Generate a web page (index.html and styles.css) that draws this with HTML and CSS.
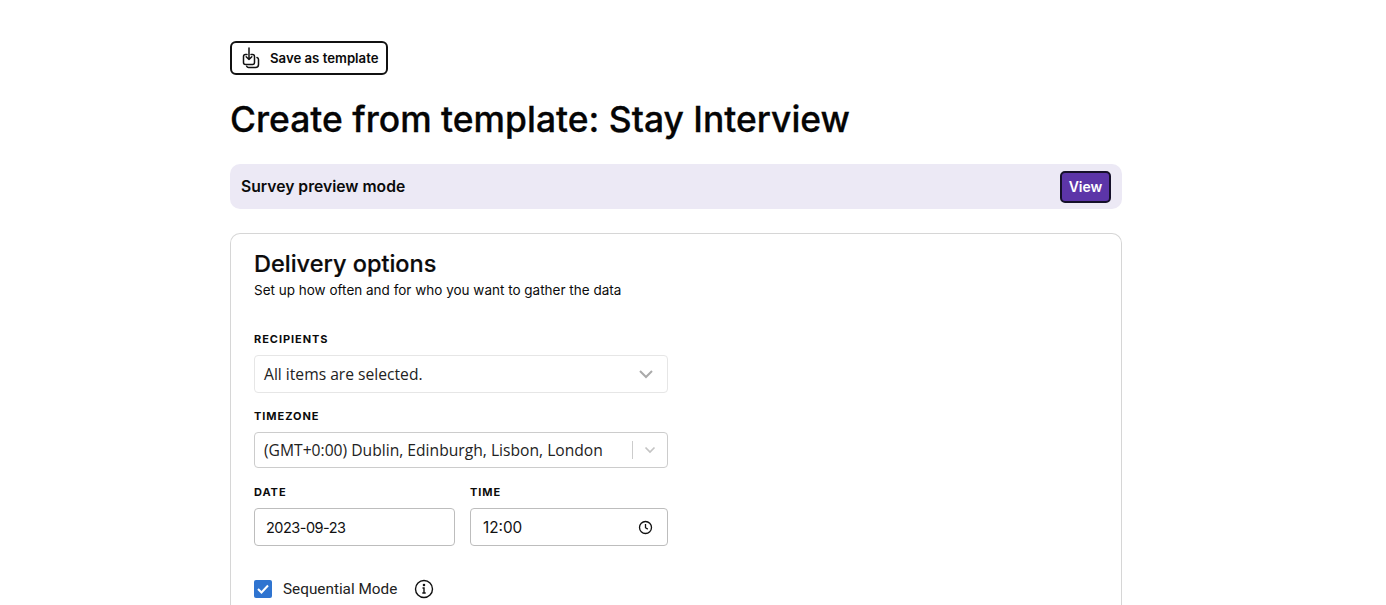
FILE: index.html
```html
<!DOCTYPE html>
<html lang="en">
<head>
  <meta charset="UTF-8">
  <meta name="viewport" content="width=device-width, initial-scale=1">
  <title>Create from template: Stay Interview</title>
  <link rel="stylesheet" href="styles.css">
</head>
<body>
  <div class="page">
    <button class="save-btn" type="button">
      <svg class="save-icon" width="18" height="22" viewBox="0 0 18 22" fill="none" stroke="#111" stroke-width="1.5" stroke-linecap="round" stroke-linejoin="round">
        <path d="M5 7.500H3.500a2 2 0 0 0-2 2v6a2 2 0 0 0 2 2h7a2 2 0 0 0 2-2v-6a2 2 0 0 0-2-2H9"/>
        <path d="M7 1v11.500M4.200 9.700 7 12.500l2.800-2.800"/>
        <path d="M15 10.500a2 2 0 0 1 1.500 1.900v5.100a3 3 0 0 1-3 3H6.500a2 2 0 0 1-1.800-1.200"/>
      </svg>
      <span>Save as template</span>
    </button>

    <h1 class="page-title">Create from template: Stay Interview</h1>

    <div class="preview-bar">
      <span class="preview-label">Survey preview mode</span>
      <button class="view-btn" type="button">View</button>
    </div>

    <section class="card">
      <h2 class="card-title">Delivery options</h2>
      <p class="card-sub">Set up how often and for who you want to gather the data</p>

      <div class="form">
        <label class="field-label label-recipients">RECIPIENTS</label>
        <div class="select select-multi">
          <span>All items are selected.</span>
          <svg width="16" height="10" viewBox="0 0 16 10" fill="none" stroke="#aaa" stroke-width="2"><path d="M2 2l6 6 6-6"/></svg>
        </div>

        <label class="field-label label-timezone">TIMEZONE</label>
        <div class="select select-zone">
          <span>(GMT+0:00) Dublin, Edinburgh, Lisbon, London</span>
          <div class="zone-end">
            <i class="zone-sep"></i>
            <svg width="12" height="8" viewBox="0 0 12 8" fill="none" stroke="#c4c4c4" stroke-width="1.700"><path d="M1.500 1.500 6 6l4.500-4.500"/></svg>
          </div>
        </div>

        <div class="date-row">
          <div class="date-col">
            <label class="field-label">DATE</label>
            <div class="input input-date">2023-09-23</div>
          </div>
          <div class="time-col">
            <label class="field-label">TIME</label>
            <div class="input input-time">
              <span>12:00</span>
              <svg width="15" height="15" viewBox="0 0 15 15" fill="none" stroke="#111" stroke-width="1.300"><circle cx="7.500" cy="7.500" r="6"/><path d="M7.500 4v3.700l2.300 1.400"/></svg>
            </div>
          </div>
        </div>

        <div class="check-row">
          <span class="checkbox">
            <svg width="12" height="10" viewBox="0 0 12 10" fill="none" stroke="#fff" stroke-width="2"><path d="M1 5l3.500 3.500L11 1.500"/></svg>
          </span>
          <span class="check-label">Sequential Mode</span>
          <svg class="info-icon" width="20" height="20" viewBox="0 0 20 20" fill="none" stroke="#111" stroke-width="1.400">
            <circle cx="10" cy="10" r="8.500"/>
            <path d="M8.500 9H10v5M8.300 14h3.400"/>
            <circle cx="10" cy="6" r=".6" fill="#111"/>
          </svg>
        </div>
      </div>
    </section>
  </div>
</body>
</html>
```

FILE: styles.css
```css
html, body { margin: 0; padding: 0; height: 100%; overflow: hidden; }
body { background: #fff; color: #0b0b0b; font-family: Inter, "Noto Sans", sans-serif; }

.page { display: flex; flex-direction: column; align-items: stretch; width: 892px; height: 100%; margin-left: 230px; padding-top: 41px; box-sizing: border-box; }

.save-btn { display: flex; flex: none; align-items: center; gap: 10px; width: 158px; height: 34px; padding: 0 0 0 10px; background: #fff; border: 2px solid #111; border-radius: 6px; font-family: inherit; font-size: 13.200px; font-weight: 600; color: #0b0b0b; box-sizing: border-box; }
.save-icon { flex: none; }

.page-title { margin: 25px 0 0; font-size: 35.450px; line-height: 40px; font-weight: 500; -webkit-text-stroke: 0.3px #050505; color: #050505; }

.preview-bar { display: flex; flex: none; justify-content: space-between; align-items: center; height: 45px; margin-top: 24px; padding: 0 11px; background: #ece9f5; border-radius: 10px; box-sizing: border-box; }
.preview-label { font-size: 15.700px; font-weight: 600; }
.view-btn { width: 51px; height: 32px; padding: 0; background: #5c35a8; border: 2px solid #15102a; border-radius: 5px; color: #fff; font-family: inherit; font-size: 14px; font-weight: 600; }

.card { flex: 1; margin-top: 24px; padding: 15px 23px 0; border: 1px solid #d6d6d6; border-bottom: none; border-radius: 10px 10px 0 0; box-sizing: border-box; }
.card-title { margin: 0; font-size: 23.500px; line-height: 30px; font-weight: 500; -webkit-text-stroke: 0.2px #0b0b0b; }
.card-sub { margin: 2px 0 0; font-size: 13.500px; line-height: 18px; }

.form { width: 414px; }
.field-label { display: block; font-size: 11px; line-height: 14px; font-weight: 700; letter-spacing: 0.95px; }
.label-recipients { margin-top: 33px; margin-bottom: 9px; }
.label-timezone { margin-top: 16px; margin-bottom: 9px; }

.select { display: flex; justify-content: space-between; align-items: center; box-sizing: border-box; background: #fff; font-family: "Open Sans", sans-serif; font-size: 15.650px; color: #222; }
.select-multi { height: 38px; padding: 0 13px 0 9px; border: 1px solid #e6e6e6; border-radius: 4px; }
.select-zone { height: 36px; padding: 0 11px 0 9px; border: 1px solid #ccc; border-radius: 4px; }
.zone-end { display: flex; align-items: center; gap: 11px; }
.zone-sep { display: block; width: 1px; height: 18px; background: #ccc; }

.date-row { display: flex; gap: 15px; margin-top: 17px; }
.date-col { width: 201px; }
.time-col { width: 198px; }
.date-row .field-label { margin-bottom: 9px; }
.input { display: flex; align-items: center; box-sizing: border-box; height: 38px; padding: 0 12px; border: 1px solid #bdbdbd; border-radius: 4px; font-size: 15.300px; color: #111; }
.input-date { padding-left: 11px; font-size: 14.500px; letter-spacing: -0.5px; }
.input-time { justify-content: space-between; padding-right: 14px; }

.check-row { display: flex; align-items: center; margin-top: 33px; }
.checkbox { display: flex; align-items: center; justify-content: center; width: 18px; height: 18px; background: #2f74d0; border-radius: 2px; }
.check-label { margin-left: 11px; font-family: Roboto, sans-serif; font-size: 15.300px; color: #222; }
.info-icon { margin-left: 17px; }
```
